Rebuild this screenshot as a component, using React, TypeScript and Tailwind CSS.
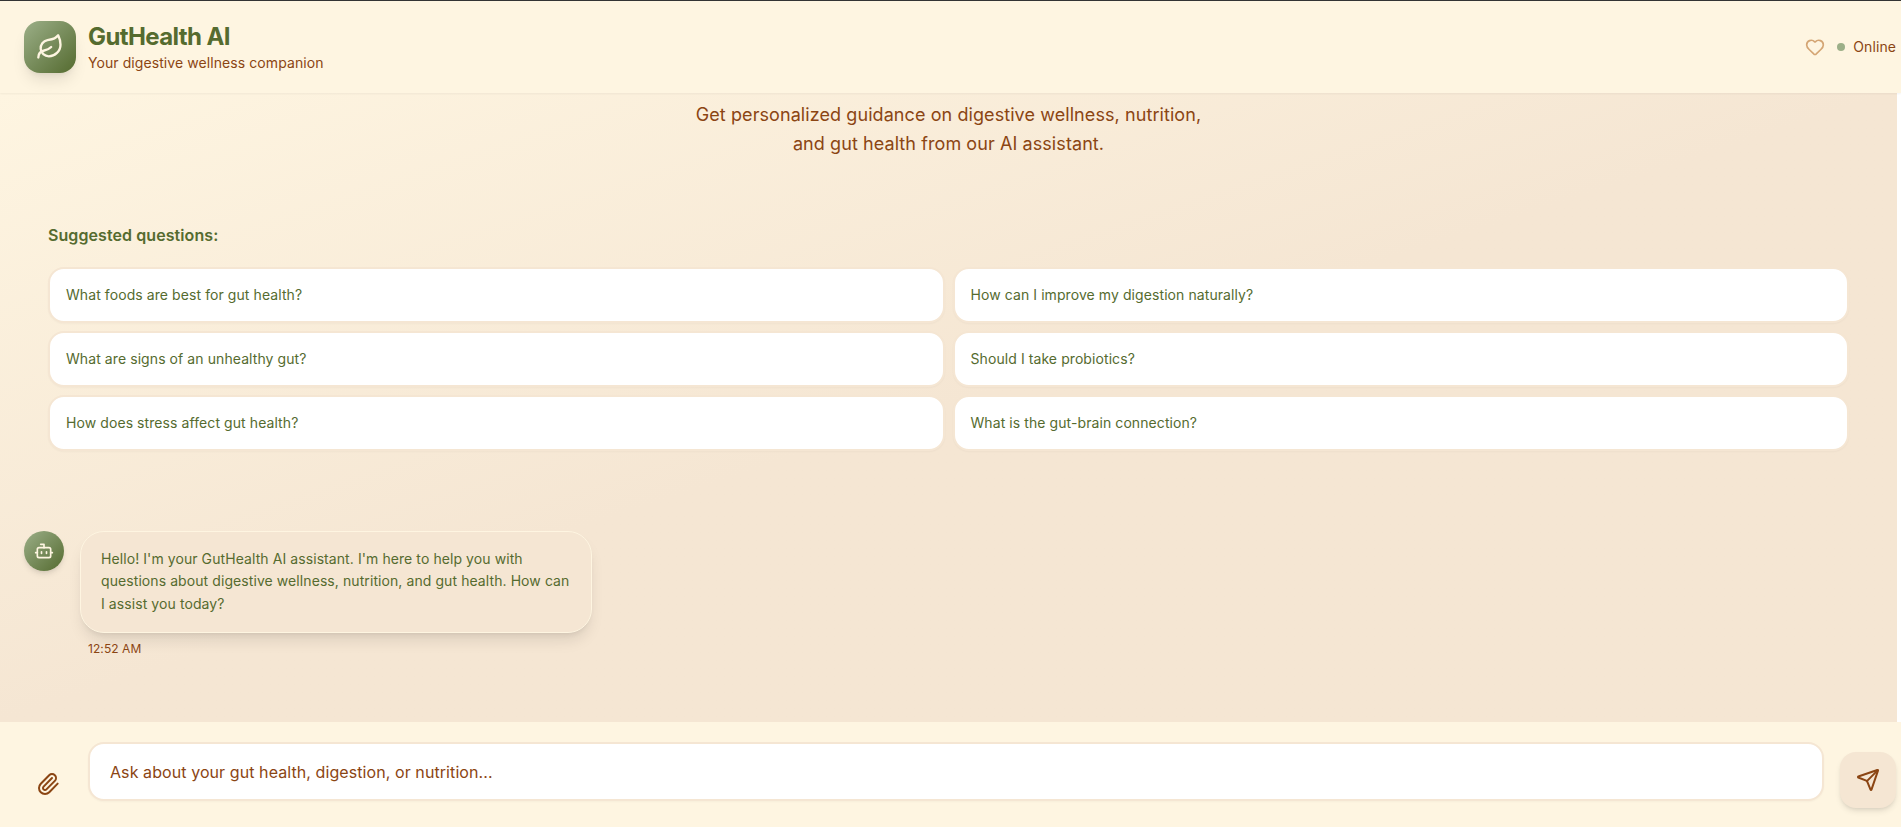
import { Heart, Leaf, Bot, Paperclip, Send } from "lucide-react";

const questions = [
  "What foods are best for gut health?",
  "How can I improve my digestion naturally?",
  "What are signs of an unhealthy gut?",
  "Should I take probiotics?",
  "How does stress affect gut health?",
  "What is the gut-brain connection?",
];

export default function App() {
  return (
    <div className="h-[827px] overflow-hidden flex flex-col bg-[#fef5e1] border-t border-[#333333] font-['Inter',sans-serif] tracking-[0.005em]">
      <header className="shrink-0 z-10 flex items-center justify-between pl-6 pr-[5px] py-5 bg-[#fef5e1] shadow-[0_1px_2px_rgba(0,0,0,0.05)]">
        <div className="flex items-center gap-3">
          <div className="w-[52px] h-[52px] rounded-2xl flex items-center justify-center bg-gradient-to-br from-[#9caf88] to-[#556b2f] shadow-lg">
            <Leaf className="w-7 h-7 text-[#fef5e1]" />
          </div>
          <div>
            <h1 className="text-2xl leading-8 font-bold tracking-tight text-[#556b2f]">GutHealth AI</h1>
            <p className="text-sm leading-5 text-[#8b4513]">Your digestive wellness companion</p>
          </div>
        </div>
        <div className="flex items-center gap-3">
          <Heart className="w-5 h-5 text-[#d4a574]" />
          <div className="flex items-center gap-2">
            <span className="w-2 h-2 rounded-full bg-[#9caf88]" />
            <span className="text-sm leading-5 text-[#8b4513]">Online</span>
          </div>
        </div>
      </header>

      <div className="flex-1 min-h-0 flex bg-white">
        <main className="flex-1 min-w-0 overflow-hidden bg-gradient-to-br from-[#fef5e1] to-[#f5e6d3] to-50%">
          <div className="text-center pt-[7px]">
            <p className="text-lg leading-[29.25px] text-[#8b4513]">
              Get personalized guidance on digestive wellness, nutrition,
              <br />
              and gut health from our AI assistant.
            </p>
          </div>
          <section className="pt-16 px-12">
            <h3 className="text-base leading-6 font-semibold text-[#556b2f] mb-5">Suggested questions:</h3>
            <div className="grid grid-cols-2 gap-2">
              {questions.map((q) => (
                <button
                  key={q}
                  className="px-4 py-4 text-left text-sm leading-5 bg-white text-[#556b2f] rounded-2xl border-2 border-[#f5e6d3] shadow-[0_1px_2px_rgba(0,0,0,0.03)]"
                >
                  {q}
                </button>
              ))}
            </div>
          </section>
          <section className="pt-20 px-6 flex gap-4">
            <div className="w-10 h-10 rounded-full shrink-0 flex items-center justify-center bg-gradient-to-br from-[#9caf88] to-[#556b2f] shadow-md">
              <Bot className="w-5 h-5 text-[#fef5e1]" />
            </div>
            <div>
              <div className="w-[512px] px-5 py-4 rounded-3xl bg-[#f5e6d3] border border-[#fef5e1] shadow-lg text-sm leading-[22.75px] text-[#556b2f]">
                Hello! I'm your GutHealth AI assistant. I'm here to help you with questions about digestive wellness, nutrition, and gut health. How can I assist you today?
              </div>
              <p className="mt-2 pl-2 text-xs leading-4 text-[#8b4513]">12:52 AM</p>
            </div>
          </section>
        </main>
        <div className="w-1 shrink-0 bg-white" />
      </div>

      <footer className="h-[105px] shrink-0 flex items-end gap-4 pl-6 pr-[5px] pb-[19px] bg-[#fef5e1]">
        <button className="p-3 shrink-0">
          <Paperclip className="w-6 h-6 text-[#8b4513]" />
        </button>
        <div className="flex-1 h-[59px] mb-[7px] rounded-2xl bg-white border-2 border-[#f5e6d3] shadow-[0_1px_2px_rgba(0,0,0,0.03)] flex items-center px-5 text-base text-[#8b4513]">
          Ask about your gut health, digestion, or nutrition...
        </div>
        <button className="w-14 h-14 shrink-0 rounded-2xl bg-[#f5e6d3] flex items-center justify-center shadow-md">
          <Send className="w-6 h-6 text-[#8b4513]" />
        </button>
      </footer>
    </div>
  );
}
